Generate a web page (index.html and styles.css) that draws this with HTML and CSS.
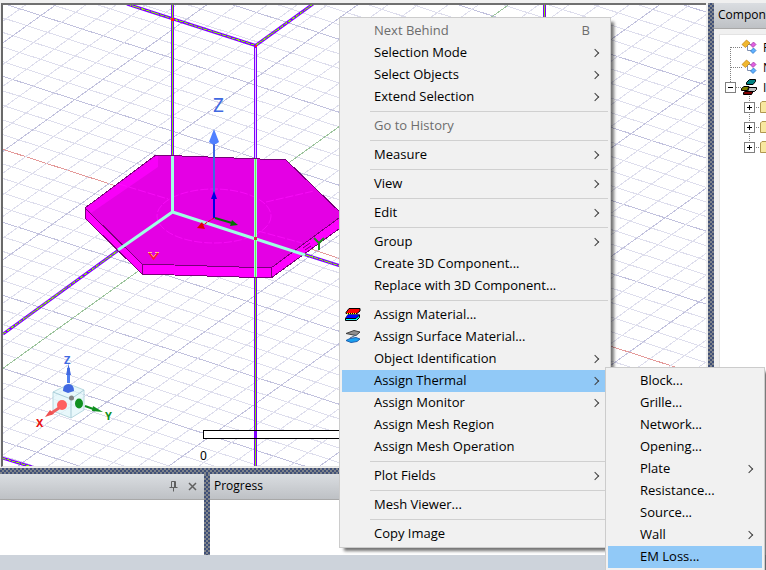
FILE: index.html
```html
<!DOCTYPE html>
<html lang="en">
<head>
    <meta charset="UTF-8">
    <meta name="viewport" content="width=device-width, initial-scale=1.0">
    <title>3D Modeler</title>

    <link rel="stylesheet" href="styles.css">
</head>
<body>
    <div class="app">
        <div class="workspace">
            <div class="left">
                <div class="viewport">
                    <svg class="scene" aria-label="3D model">
                        <g transform="translate(-3 -5)">
                            <g id="grid" fill="none" shape-rendering="crispEdges"></g>

                            <!-- region box, behind -->
                            <g class="edge">
                                <path d="M172.500 5V156M127 4L255.500 45.500L313 4M544.500 5V30M3 334L120 249M300 253L350 269M2 458L32 467"/>
                                <path d="M255.500 46V160M255.500 276V467"/>
                            </g>
                            <g class="edge-core">
                                <path d="M172.500 5V156M544.500 5V30M255.500 276V467"/>
                                <path stroke-dasharray="4 1" d="M127 4L255.500 45.500L313 4M3 334L120 249M300 253L350 269M2 458L32 467"/>
                                <path stroke="#e0d0ff" d="M255.500 48V158"/>
                            </g>
                            <path fill="#ff2020" d="M171 18h3v3h-3zM255 45h2v2h-2z"/>

                            <!-- plate -->
                            <g stroke="#780078" stroke-width="1" stroke-linejoin="round" shape-rendering="crispEdges">
                                <path fill="#ff00ff" d="M85 208L142 264L271 268L343 215V226L271 278L142 274L85 218Z"/>
                                <path fill="#e400e4" d="M156 155L286 160L343 215L271 268L142 264L85 208Z"/>
                                <path d="M142 264V274M271 268V278"/>
                            </g>
                            <path fill="#f800f8" d="M86 208L156 156H158V167L91 213Z"/>
                            <g fill="none" stroke="#ff10ff" stroke-dasharray="8 2" stroke-opacity=".7">
                                <ellipse cx="214" cy="216" rx="57" ry="27"/>
                                <path d="M119 184L168 199M266 202L314 191M258 231L302 243"/>
                            </g>
                            <g fill="none" stroke="#a0ffe4" stroke-width="3">
                                <path d="M118 250L172.500 212L305 255M172.500 156V212M255.500 159V277"/>
                            </g>
                            <path fill="none" stroke="#70f040" d="M255.500 159V277"/>
                            <path fill="#e02050" d="M254 237h3v3h-3z"/>
                            <path fill="none" stroke="#780078" d="M303 248l7-5M305 250l6-4"/>

                            <!-- model axes -->
                            <g fill="#4169e1" stroke="#4169e1">
                                <path stroke-width="2" d="M214 143V194"/>
                                <path fill="#5080ff" stroke-width="0" d="M214 129L209 142L212 144H216L219 142Z"/>
                            </g>
                            <path stroke="#0000e0" stroke-width="2" d="M214 198V218"/>
                            <path fill="#0000e0" d="M214 191L211 199H217Z"/>
                            <path stroke="#e00000" stroke-dasharray="3 1" d="M214 218L203 225"/>
                            <path fill="#e00000" d="M197 228L202 222L205 229Z"/>
                            <path stroke="#007000" stroke-width="2" d="M215 218L232 223"/>
                            <path fill="#007000" d="M238 225L232 220L230 226Z"/>
                            <path fill="none" stroke="#ffd080" d="M148 252.500H152M155 252.500H159M151 254L153.500 257L156 254"/>
                            <path fill="none" stroke="#ff2020" stroke-width="1.500" d="M149 253L153.500 259L158 253"/>
                            <text class="axis" x="213" y="112" font-size="19" fill="#4169e1">Z</text>
                            <path fill="none" stroke="#209020" stroke-width="2" d="M314 238L319 243L324 238M319 243V250"/>

                            <!-- scale -->
                            <path fill="#fff" stroke="#000" shape-rendering="crispEdges" d="M203.500 430.500H500V438.500H203.500Z"/>
                            <path fill="#8000ff" d="M254 431h3v7h-3z"/>
                            <text class="axis" x="200" y="460" font-size="12">0</text>

                            <!-- orientation cube -->
                            <path fill="#e0f6fa" fill-opacity=".75" stroke="#b8d8e0" d="M53 392L69 384L84 390V410L71 418L53 411Z"/>
                            <path fill="none" stroke="#a8ccd8" d="M53 392L71 399L84 390M71 399V418"/>
                            <path stroke="#5080f0" stroke-width="3" d="M68.500 368V383"/>
                            <path fill="#4169e1" d="M68.500 364L66 375H71ZM63 391Q63 384 68.500 384Q74 384 74 391L68 393Z"/>
                            <circle cx="71.500" cy="398" r="2.500" fill="#808080"/>
                            <circle cx="62" cy="405" r="5" fill="#ff6060"/>
                            <path stroke="#f06060" stroke-width="3" d="M59 408L50 414"/>
                            <path fill="#f05050" d="M45 417L50 410L54 414Z"/>
                            <ellipse cx="79" cy="403.500" rx="4" ry="5" fill="#109020"/>
                            <path stroke="#109020" stroke-width="2" d="M85 406L96 410"/>
                            <path fill="#109020" d="M103 412L93 406L92 411Z"/>
                            <text class="axis bold" x="64" y="364" font-size="11" fill="#4169e1">Z</text>
                            <text class="axis bold" x="36" y="427" font-size="11" fill="#e81010">X</text>
                            <text class="axis bold" x="105" y="420" font-size="11" fill="#109020">Y</text>
                        </g>
                    </svg>
                </div>
                <div class="splitter horizontal"></div>
                <div class="docks">
                    <section class="dock messages">
                        <header class="dock-head">
                            <button type="button" aria-label="Pin">
                                <svg width="9" height="11" viewBox="0 0 9 11"><path fill="none" stroke="#606060" d="M2.500 0.500H6.500V6M2.500 0.500V6M0.500 6.500H8.500M4.500 6.500V10.500M5.500 1V6"/></svg>
                            </button>
                            <button type="button" aria-label="Close">
                                <svg width="9" height="9" viewBox="0 0 9 9"><path stroke="#606060" stroke-width="1.500" d="M1 1L8 8M8 1L1 8"/></svg>
                            </button>
                        </header>
                    </section>
                    <div class="splitter vertical"></div>
                    <section class="dock progress">
                        <header class="dock-head">Progress</header>
                    </section>
                </div>
            </div>
            <div class="splitter vertical"></div>
            <section class="components">
                <header class="dock-head">Component</header>
                <div class="tree">
                    <svg class="tree-lines"><path d="M10.500 12V47M11 12.500H22M11 32.500H22M16 52.500H22M29.500 61V109M34 72.500H40M34 92.500H40M34 112.500H40"/></svg>
                    <ul>
                        <li class="part"><svg width="16" height="16"><use href="#part"/></svg><span>P</span></li>
                        <li class="part"><svg width="16" height="16"><use href="#part"/></svg><span>N</span></li>
                        <li class="open">
                            <button type="button" class="toggle" aria-label="Collapse">
                                <svg width="9" height="9"><path stroke="#000" d="M2 4.500H7"/></svg>
                            </button>
                            <svg width="16" height="16" stroke="#000"><path fill="#008080" d="M5.500 3.500L8.500 0.500H14.500V2.500L12 5.500H5.500Z"/><path fill="#808000" d="M0.500 11.500V9.500L3 7.500H8L6.500 11.500Z"/><path fill="#c0c0c0" d="M7 11.500L8 8.500H15.500V10.500L13.500 12.500H8Z"/><path fill="#800000" d="M2.500 15.500V13.500L4 12.500H12L10.500 15.500Z"/></svg>
                            <span>I</span>
                        </li>
                        <li class="folder"><button type="button" class="toggle" aria-label="Expand"><svg width="9" height="9"><use href="#plus"/></svg></button><svg width="16" height="14"><use href="#folder"/></svg></li>
                        <li class="folder"><button type="button" class="toggle" aria-label="Expand"><svg width="9" height="9"><use href="#plus"/></svg></button><svg width="16" height="14"><use href="#folder"/></svg></li>
                        <li class="folder"><button type="button" class="toggle" aria-label="Expand"><svg width="9" height="9"><use href="#plus"/></svg></button><svg width="16" height="14"><use href="#folder"/></svg></li>
                    </ul>
                </div>
            </section>
        </div>
        <div class="statusbar"></div>
    </div>

    <ul class="menu main-menu">
        <li><button type="button" disabled>Next Behind <kbd>B</kbd></button></li>
        <li><button type="button" class="more">Selection Mode</button></li>
        <li><button type="button" class="more">Select Objects</button></li>
        <li><button type="button" class="more">Extend Selection</button></li>
        <li class="line"></li>
        <li><button type="button" disabled>Go to History</button></li>
        <li class="line"></li>
        <li><button type="button" class="more">Measure</button></li>
        <li class="line"></li>
        <li><button type="button" class="more">View</button></li>
        <li class="line"></li>
        <li><button type="button" class="more">Edit</button></li>
        <li class="line"></li>
        <li><button type="button" class="more">Group</button></li>
        <li><button type="button">Create 3D Component...</button></li>
        <li><button type="button">Replace with 3D Component...</button></li>
        <li class="line"></li>
        <li>
            <button type="button">
                <svg class="icon" width="16" height="14"><path fill="#f00" stroke="#000" d="M1 4.500L4 0.500H15V3L12 5.500H1Z"/><path stroke="#ff0" stroke-dasharray="1 1" d="M2 5.500H12"/><path fill="#00f" stroke="#000" stroke-width=".5" d="M0.500 10L3 6.500H14.500V8.500L12 10.500H0.500Z"/><path fill="#0ff" stroke="#000" d="M0.500 12.500V10.500H11L14.500 7V9.500L11.500 12.500Z"/></svg>
                Assign Material...
            </button>
        </li>
        <li>
            <button type="button">
                <svg class="icon" width="16" height="14"><path fill="#18a0f0" stroke="#2060b0" d="M1 10.500L5 8.500L11 7.500L15 9L12 11.500L6 12.500Z"/><path fill="#909090" stroke="#404040" d="M1 3.500L9 0.500L15 2L11 5.500L6 4.500Z"/><path stroke="#406080" d="M11 5L5 8"/></svg>
                Assign Surface Material...
            </button>
        </li>
        <li><button type="button" class="more">Object Identification</button></li>
        <li class="has-sub">
            <button type="button" class="more active">Assign Thermal</button>
            <ul class="menu sub-menu">
                <li><button type="button">Block...</button></li>
                <li><button type="button">Grille...</button></li>
                <li><button type="button">Network...</button></li>
                <li><button type="button">Opening...</button></li>
                <li><button type="button" class="more">Plate</button></li>
                <li><button type="button">Resistance...</button></li>
                <li><button type="button">Source...</button></li>
                <li><button type="button" class="more">Wall</button></li>
                <li><button type="button" class="active">EM Loss...</button></li>
            </ul>
        </li>
        <li><button type="button" class="more">Assign Monitor</button></li>
        <li><button type="button">Assign Mesh Region</button></li>
        <li><button type="button">Assign Mesh Operation</button></li>
        <li class="line"></li>
        <li><button type="button" class="more">Plot Fields</button></li>
        <li class="line"></li>
        <li><button type="button">Mesh Viewer...</button></li>
        <li class="line"></li>
        <li><button type="button">Copy Image</button></li>
    </ul>

    <svg class="defs">
        <symbol id="part" viewBox="0 0 16 16">
            <path fill="none" stroke="#8090b0" d="M6.500 6V11.500H11M7 5.500H11"/>
            <path fill="#f0b830" stroke="#c08010" stroke-width=".7" d="M1 5.500L5.500 1L9 4L4.500 8.500Z"/>
            <path fill="#e060e0" stroke="#a030a0" stroke-width=".7" d="M9.500 6L12.500 3L15 5.500L12 8.500Z"/>
            <path fill="#60b0ff" stroke="#2070c0" stroke-width=".7" d="M9.500 12L12.500 9L15 11.500L12 14.500Z"/>
        </symbol>
        <symbol id="plus" viewBox="0 0 9 9"><path stroke="#000" d="M2 4.500H7M4.500 2V7"/></symbol>
        <symbol id="folder" viewBox="0 0 16 14"><path fill="#f8e8a0" stroke="#b09850" d="M0.500 12.500V3L2 1.500H7L8 3H15.500V12.500Z"/></symbol>
    </svg>

    <script>
        var grid = document.querySelector("#grid");
        var str = "";

        // slope, start y at x=2, distance between lines
        function drawLines(slope, start, gap, axisColor) {
            var lines = "";
            var end = "";
            for (var i = -60; i < 60; i++) {
                var y = start + gap * i;
                var color = i % 5 == 0 ? "#c2c2de" : "#dedeed";
                var line = '<path stroke="' + (i == 0 ? axisColor : color) + '" d="M2 ' + y + 'L1602 ' + (y + slope * 1600) + '"/>';
                if (i % 5 == 0) end += line;
                else lines += line;
            }
            return lines + end;
        }

        str += drawLines(0.324, 149, 14.6, "#e49a9a");
        str += drawLines(-0.719, 369, 21.7, "#9cc49c");
        grid.innerHTML = str;
    </script>
</body>
</html>
```
FILE: styles.css
```css
* {
    box-sizing: border-box;
}

body {
    margin: 0;
    height: 100vh;
    overflow: hidden;
    background-color: #f0f0f0;
    color: #000;
    font-family: "Open Sans", "Noto Sans", sans-serif;
    font-size: 13px;
}

ul {
    list-style: none;
    margin: 0;
    padding: 0;
}

button {
    border: 0;
    padding: 0;
    background: none;
    color: inherit;
    font: inherit;
}

.app {
    display: flex;
    flex-direction: column;
    height: 100%;
    padding-top: 3px;
}

.workspace {
    flex: 1;
    display: flex;
    min-height: 0;
}

.left {
    flex: 1;
    min-width: 0;
    display: flex;
    flex-direction: column;
}

.viewport {
    flex: 1;
    min-height: 0;
    margin: 0 2px 1px 1px;
    border-top: 2px solid #707070;
    border-left: 2px solid #696969;
    border-bottom: 1px solid #e3e3e3;
    background-color: #fff;
    overflow: hidden;
}

.scene {
    display: block;
    width: 100%;
    height: 100%;
}

.edge {
    fill: none;
    stroke: #8000ff;
    stroke-width: 3px;
}

.edge-core {
    fill: none;
    stroke: #80f000;
    stroke-width: 1px;
    shape-rendering: crispEdges;
}

.axis {
    font-family: "Noto Sans", sans-serif;
}

.bold {
    font-weight: bold;
}

.splitter {
    flex: none;
    background-color: #80848a;
    background-image: conic-gradient(#405078 25%, transparent 0 50%, #405078 0 75%, transparent 0);
    background-size: 4px 4px;
}

.horizontal {
    height: 6px;
}

.vertical {
    width: 6px;
}

/* bottom windows */
.docks {
    display: flex;
    height: 81px;
}

.dock {
    background-color: #fff;
}

.messages {
    flex: 0 0 204px;
}

.messages .dock-head {
    justify-content: flex-end;
    gap: 10px;
    padding-right: 7px;
}

.progress {
    flex: 1;
}

.dock-head {
    display: flex;
    align-items: center;
    height: 26px;
    padding: 0 4px 1px;
    border-bottom: 1px solid #a8a8a8;
    background-image: linear-gradient(#dadde1, #bec1c5);
    font-size: 12px;
    line-height: 16px;
    white-space: nowrap;
}

.dock-head svg {
    display: block;
}

.statusbar {
    height: 15px;
    background-color: #cdd3db;
}

/* component tree */
.components {
    flex: 0 0 52px;
    display: flex;
    flex-direction: column;
    overflow: hidden;
}

.tree {
    position: relative;
    flex: 1;
    margin: 5px 0 0 5px;
    border: 1px solid #e3e3e3;
    border-width: 1px 0 0 1px;
    padding: 2px 0 0 4px;
    background-color: #fff;
    overflow: hidden;
}

.tree-lines {
    position: absolute;
    left: 0;
    top: 0;
    width: 100%;
    height: 120px;
    fill: none;
    stroke: #808080;
    stroke-dasharray: 1 1;
}

.tree li {
    position: relative;
    display: flex;
    align-items: center;
    gap: 6px;
    height: 20px;
    white-space: nowrap;
}

.tree li svg {
    flex: none;
}

.tree .part {
    padding-left: 17px;
}

.tree .open {
    padding-left: 2px;
}

.tree .folder {
    padding-left: 21px;
}

.tree span {
    font-size: 12px;
}

.toggle {
    flex: none;
    width: 9px;
    height: 9px;
    background-color: #fff;
    outline: 1px solid #808080;
}

.toggle svg {
    display: block;
}

/* context menu */
.menu {
    position: absolute;
    padding: 2px;
    border: 1px solid #ccc;
    background-color: #f1f1f1;
    box-shadow: 4px 4px 3px -1px rgba(0, 0, 0, .55);
}

.main-menu {
    left: 339px;
    top: 17px;
    width: 272px;
}

.sub-menu {
    left: calc(100% - 3px);
    top: -3px;
    width: 160px;
    z-index: 1;
}

.has-sub {
    position: relative;
}

.menu button {
    position: relative;
    display: flex;
    align-items: center;
    width: 100%;
    height: 22px;
    padding: 0 18px 2px 32px;
    line-height: 20px;
    text-align: left;
    white-space: nowrap;
}

.menu button:disabled {
    color: #6d6d6d;
}

.menu .active {
    background-color: #91c9f7;
}

.menu kbd {
    margin-left: auto;
    font: inherit;
}

.menu .more::after {
    content: "";
    position: absolute;
    right: 10px;
    top: 8px;
    width: 5px;
    height: 5px;
    border: solid #404040;
    border-width: 1px 1px 0 0;
    transform: rotate(45deg);
}

.menu .icon {
    position: absolute;
    left: 3px;
    top: 4px;
}

.line {
    height: 7px;
    margin-left: 28px;
    padding-top: 3px;
}

.line::before {
    content: "";
    display: block;
    height: 1px;
    background-color: #d0d0d0;
}

.defs {
    display: none;
}
```
